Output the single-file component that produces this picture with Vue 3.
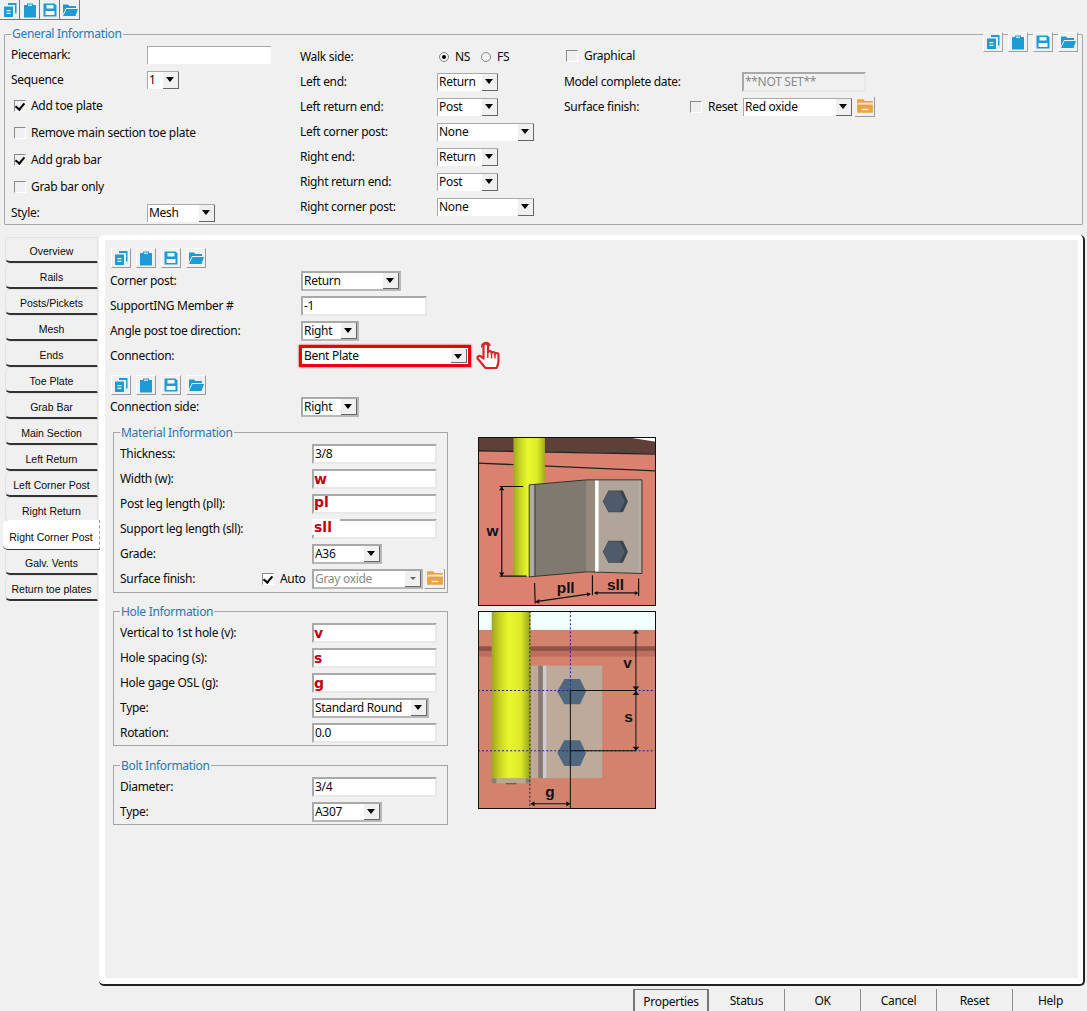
<script setup>
const tabs = ['Overview','Rails','Posts/Pickets','Mesh','Ends','Toe Plate','Grab Bar','Main Section','Left Return','Left Corner Post','Right Return','Right Corner Post','Galv. Vents','Return toe plates']
const icons = ['copy','clip','save','open']
const bottom = ['Properties','Status','OK','Cancel','Reset','Help']
const generalMid = [
  ['Left end:','Return',61],['Left return end:','Post',61],['Left corner post:','None',97],
  ['Right end:','Return',61],['Right return end:','Post',61],['Right corner post:','None',97]
]
</script>

<template>
  <div class="page">
    <svg class="defs" width="0" height="0" aria-hidden="true">
      <defs>
        <symbol id="i-copy" viewBox="0 0 16 16">
          <path fill="#1f9bd4" d="M6 1h8.500v10.500H13V3H6z"/>
          <path fill="#1f9bd4" d="M2 4.500h9V15H2z"/>
          <path fill="#e6f2f8" d="M4.500 8h4v1.200h-4zM4.500 10.800h4V12h-4z"/>
        </symbol>
        <symbol id="i-clip" viewBox="0 0 16 16">
          <path fill="#1f9bd4" d="M2 3h3V1.500h6V3h3v12.500H2z"/>
          <path fill="#bfe3f2" d="M6 2.500h4v1.500H6z"/>
        </symbol>
        <symbol id="i-save" viewBox="0 0 16 16">
          <path fill="#1f9bd4" d="M1.500 1.500h11l2 2v11h-13z"/>
          <path fill="#f4f8fa" d="M4.500 3h7v3.500h-7zM3.500 9h9v4h-9z"/>
        </symbol>
        <symbol id="i-open" viewBox="0 0 16 16">
          <path fill="#1f9bd4" d="M1 2.500h5l1.500 1.500H14v2H4L1 12z"/>
          <path fill="#1f9bd4" d="M4.500 7H16l-2.500 7H1z"/>
        </symbol>
        <symbol id="i-folder" viewBox="0 0 16 16">
          <path fill="#e9a345" d="M1 2h5.500L8 3.500h7V6H1z"/>
          <path fill="#e9a345" d="M1 6.500h14V14H1z"/>
          <path fill="#fbe6c4" d="M2 5h13v1.500H2z"/>
          <path fill="#fff3df" d="M5 10.500h6v1.200H5z"/>
        </symbol>
      </defs>
    </svg>

    <div class="toolbar top-tools">
      <span v-for="i in icons" :key="i" class="tool"><svg viewBox="0 0 16 16"><use :href="'#i-' + i"/></svg></span>
    </div>

    <section class="general">
      <span class="legend">General Information</span>
      <div class="toolbar float-tools">
        <span v-for="i in icons" :key="i" class="tool"><svg viewBox="0 0 16 16"><use :href="'#i-' + i"/></svg></span>
      </div>

      <div class="gcol g1">
        <div class="row r25"><span class="lbl w136">Piecemark:</span><span class="field flat w124"></span></div>
        <div class="row r25"><span class="lbl w136">Sequence</span><span class="select flat w32">1<i class="arrow"></i></span></div>
        <div class="row r27 chk"><i class="box on"></i>Add toe plate</div>
        <div class="row r27 chk"><i class="box"></i>Remove main section toe plate</div>
        <div class="row r27 chk"><i class="box on"></i>Add grab bar</div>
        <div class="row r27 chk"><i class="box"></i>Grab bar only</div>
        <div class="row r25"><span class="lbl w136">Style:</span><span class="select flat w68">Mesh<i class="arrow"></i></span></div>
      </div>

      <div class="gcol g2">
        <div class="row r25">
          <span class="lbl w137">Walk side:</span>
          <i class="radio on"></i><span class="rtxt">NS</span>
          <i class="radio gap"></i><span class="rtxt">FS</span>
        </div>
        <div v-for="r in generalMid" :key="r[0]" class="row r25">
          <span class="lbl w137">{{ r[0] }}</span>
          <span class="select flat" :style="{ width: r[2] + 'px' }">{{ r[1] }}<i class="arrow"></i></span>
        </div>
      </div>

      <div class="gcol g3">
        <div class="row r25 chk graph"><i class="box"></i>Graphical</div>
        <div class="row r25"><span class="lbl w178">Model complete date:</span><span class="field disabled w124">**NOT SET**</span></div>
        <div class="row r25">
          <span class="lbl w126">Surface finish:</span>
          <i class="box"></i><span class="reset">Reset</span>
          <span class="select flat w109">Red oxide<i class="arrow"></i></span>
          <span class="folder"><svg viewBox="0 0 16 16"><use href="#i-folder"/></svg></span>
        </div>
      </div>
    </section>

    <main class="main">
      <nav class="tabs">
        <div v-for="t in tabs" :key="t" class="tab" :class="{ active: t === 'Right Corner Post' }">{{ t }}</div>
      </nav>

      <div class="panel">
        <div class="inner">
          <div class="toolbar in-tools">
            <span v-for="i in icons" :key="i" class="tool sm"><svg viewBox="0 0 16 16"><use :href="'#i-' + i"/></svg></span>
          </div>
          <div class="row r25"><span class="lbl w191">Corner post:</span><span class="select w100">Return<i class="arrow"></i></span></div>
          <div class="row r25"><span class="lbl w191">SupportING Member #</span><span class="field w126">-1</span></div>
          <div class="row r25"><span class="lbl w191">Angle post toe direction:</span><span class="select w58">Right<i class="arrow"></i></span></div>
          <div class="row r25 conn">
            <span class="lbl w189">Connection:</span>
            <span class="red"><span class="select w166 plain">Bent Plate<i class="arrow"></i></span></span>
            <svg class="hand" viewBox="0 0 26 30">
              <path fill="none" stroke="#d8242a" stroke-width="1.600" d="M6 6.500C4.500 1.500 12.500-.5 14 5"/>
              <path fill="#fff" stroke="#d8242a" stroke-width="2.200" stroke-linejoin="round" d="M7.500 5c0-3 4.500-3 4.500 0v6.500c0-2 3.500-2 3.500 0v1c0-2 3.500-2 3.500 0v1c0-2 3.500-2 3.500 0v6.500c0 3-1 5-2 7H9.500L2 18c-1.500-2 1-4 3-2.500l2.500 2z"/>
              <path fill="none" stroke="#d8242a" stroke-width="1.400" d="M11.800 12v5M15.500 12.500v5M19 13.500v4"/>
            </svg>
          </div>
          <div class="toolbar in-tools second">
            <span v-for="i in icons" :key="i" class="tool sm"><svg viewBox="0 0 16 16"><use :href="'#i-' + i"/></svg></span>
          </div>
          <div class="row r25"><span class="lbl w191">Connection side:</span><span class="select w58">Right<i class="arrow"></i></span></div>

          <div class="lower">
            <div class="forms">
              <section class="group mat">
                <span class="legend sm">Material Information</span>
                <div class="row r25"><span class="lbl w192">Thickness:</span><span class="field w125">3/8</span></div>
                <div class="row r25"><span class="lbl w192">Width (w):</span><span class="field w125 mark">w</span></div>
                <div class="row r25"><span class="lbl w192">Post leg length (pll):</span><span class="field w125 mark up">pl</span></div>
                <div class="row r25"><span class="lbl w192">Support leg length (sll):</span><span class="field w125 mark"><b class="patch">sll</b></span></div>
                <div class="row r25"><span class="lbl w192">Grade:</span><span class="select w70">A36<i class="arrow"></i></span></div>
                <div class="row r25">
                  <span class="lbl w142">Surface finish:</span>
                  <i class="box on white"></i><span class="auto">Auto</span>
                  <span class="select w111 gray">Gray oxide<i class="arrow small"></i></span>
                  <span class="folder tight"><svg viewBox="0 0 16 16"><use href="#i-folder"/></svg></span>
                </div>
              </section>
              <section class="group hole">
                <span class="legend sm">Hole Information</span>
                <div class="row r25"><span class="lbl w192">Vertical to 1st hole (v):</span><span class="field w125 mark">v</span></div>
                <div class="row r25"><span class="lbl w192">Hole spacing (s):</span><span class="field w125 mark">s</span></div>
                <div class="row r25"><span class="lbl w192">Hole gage OSL (g):</span><span class="field w125 mark">g</span></div>
                <div class="row r25"><span class="lbl w192">Type:</span><span class="select w117">Standard Round<i class="arrow"></i></span></div>
                <div class="row r25"><span class="lbl w192">Rotation:</span><span class="field w125">0.0</span></div>
              </section>
              <section class="group bolt">
                <span class="legend sm">Bolt Information</span>
                <div class="row r25"><span class="lbl w192">Diameter:</span><span class="field w125">3/4</span></div>
                <div class="row r25"><span class="lbl w192">Type:</span><span class="select w70">A307<i class="arrow"></i></span></div>
              </section>
            </div>

            <div class="figures">
              <svg class="fig f1" viewBox="25 22 532 505">
                <defs>
                  <linearGradient id="post1" x1="0" x2="1" y1="0" y2="0">
                    <stop offset="0" stop-color="#9fa81c"/><stop offset=".2" stop-color="#c6d424"/><stop offset=".45" stop-color="#e8f82c"/><stop offset=".75" stop-color="#dcec2a"/><stop offset="1" stop-color="#a3ab1c"/>
                  </linearGradient>
                </defs>
                <rect x="25" y="22" width="532" height="505" fill="#db8170"/>
                <path fill="#5f4039" d="M25 22h532v50L25 62z"/>
                <path fill="#fff" d="M480 24h77v12z"/>
                <path fill="none" stroke="#222" stroke-width="4" d="M25 63L557 73M25 100L557 123"/>
                <rect x="131" y="22" width="94" height="416" fill="url(#post1)"/>
                <path fill="#b5aca0" d="M178 165L350 150H515V430L350 425 178 440z"/>
                <path fill="#7f7970" d="M195 164L350 150V425L195 438z"/>
                <rect x="350" y="151" width="25" height="274" fill="#97897b"/>
                <rect x="375" y="151" width="11" height="274" fill="#fff"/>
                <rect x="386" y="151" width="118" height="278" fill="#b0a598"/>
                <path fill="none" stroke="#222" stroke-width="2.500" d="M178 165L350 150H515V430L350 425 178 440zM195 164V438"/>
                <path fill="#3c434d" d="M415 182H458L473 215 458 247H415L398 215z"/>
                <path fill="#4f5a6a" d="M415 184H448L464 215 448 245H415L400 215z"/>
                <path fill="#3c434d" d="M415 332H458L473 365 458 398H415L398 365z"/>
                <path fill="#4f5a6a" d="M415 334H448L464 365 448 396H415L400 365z"/>
                <g fill="none" stroke="#111" stroke-width="3.500">
                  <path d="M90 170H160M90 438H170M96 172V436"/>
                  <path d="M194 458L196 520M367 435V495M505 445V497M198 514L360 491M374 488H500"/>
                </g>
                <path fill="#111" d="M96 170L88 181H104zM96 438L88 427H104zM196 515L208 506V520zM362 491L350 486 352 499zM372 488L382 482V495zM504 488L494 482V495z"/>
                <text class="dimtxt" x="68" y="318" text-anchor="middle">w</text>
                <text class="dimtxt" x="287" y="487" text-anchor="middle">pll</text>
                <text class="dimtxt" x="436" y="478" text-anchor="middle">sll</text>
              </svg>

              <svg class="fig f2" viewBox="25 19 532 591">
                <defs>
                  <linearGradient id="post2" x1="0" x2="1" y1="0" y2="0">
                    <stop offset="0" stop-color="#9ca61c"/><stop offset=".2" stop-color="#c8d424"/><stop offset=".45" stop-color="#e8f82c"/><stop offset=".75" stop-color="#dce92a"/><stop offset="1" stop-color="#96a01c"/>
                  </linearGradient>
                </defs>
                <rect x="25" y="19" width="532" height="591" fill="#d3836d"/>
                <rect x="25" y="19" width="532" height="56" fill="#f0fffc"/>
                <rect x="25" y="124" width="532" height="14" fill="#8f5447"/>
                <rect x="25" y="138" width="532" height="17" fill="#bf6f60"/>
                <rect x="182" y="182" width="214" height="336" fill="#bdaa9a"/>
                <rect x="205" y="182" width="14" height="336" fill="#857a70"/>
                <rect x="219" y="182" width="10" height="336" fill="#cfc9d2"/>
                <rect x="66" y="19" width="116" height="500" fill="url(#post2)"/>
                <rect x="66" y="519" width="116" height="15" fill="#b5a99a"/>
                <rect x="66" y="519" width="14" height="15" fill="#86806f"/>
                <rect x="168" y="519" width="14" height="15" fill="#86806f"/>
                <path stroke="#222" stroke-width="2" d="M108 535H140"/>
                <path fill="#4f687f" d="M283 222H330L348 259 330 297H283L262 259z"/>
                <path fill="#4f687f" d="M283 405H330L348 443 330 482H283L262 443z"/>
                <g fill="none" stroke-width="3" stroke-dasharray="6 6">
                  <path stroke="#2020a0" d="M25 256H557M25 436H557M301 19V256"/>
                  <path stroke="#222" d="M180 19V610"/>
                </g>
                <path fill="none" stroke="#111" stroke-width="3" d="M301 256H497M301 436H497M301 256V610M497 78V434M184 595H299"/>
                <path fill="#111" d="M497 75L487 86H507zM497 256L487 244H507zM497 258L487 270H507zM497 436L487 424H507zM182 595L194 587V603zM301 595L289 587V603z"/>
                <text class="dimtxt" x="472" y="188" text-anchor="middle">v</text>
                <text class="dimtxt" x="475" y="350" text-anchor="middle">s</text>
                <text class="dimtxt" x="240" y="575" text-anchor="middle">g</text>
              </svg>
            </div>
          </div>
        </div>
      </div>
    </main>

    <footer class="bottom">
      <span v-for="(b, n) in bottom" :key="b" class="btab" :class="{ on: n === 0 }">{{ b }}</span>
    </footer>
  </div>
</template>

<style>
html, body { margin: 0; background: #f0f0f0; }
</style>

<style scoped>
.page { position: relative; width: 1087px; height: 1011px; overflow: hidden; background: #f0f0f0; color: #0a0a0a; font: 12px/16px "Noto Sans", "Open Sans", sans-serif; letter-spacing: -.3px; }
.defs { position: absolute; }
.toolbar { display: flex; }
.top-tools { height: 20px; }
.tool { width: 20px; height: 20px; box-sizing: border-box; background: #f0f0f0; border-right: 1px solid #777; border-bottom: 1px solid #777; display: flex; align-items: center; justify-content: center; }
.tool svg { width: 16px; height: 16px; }
.general { position: relative; box-sizing: border-box; margin: 14px 0 0 4px; width: 1079px; height: 191px; border: 1px solid #a6a6a6; display: flex; padding: 7px 0 0 6px; border-radius: 1px; }
.legend { position: absolute; left: 6px; top: -8px; line-height: 14px; padding: 0 1px; background: #f0f0f0; color: #2a77b4; }
.float-tools { position: absolute; right: 4px; top: -3px; gap: 5px; }
.float-tools .tool { border: 0; border-right: 1px solid #a0a0a0; border-bottom: 1px solid #a0a0a0; border-top: 1px solid #fff; border-left: 1px solid #fff; }
.gcol { display: flex; flex-direction: column; }
.g1 { width: 289px; }
.g2 { width: 264px; padding-top: 2px; }
.g3 { padding-top: 2px; }
.row { display: flex; align-items: center; flex: none; white-space: nowrap; }
.r25 { height: 25px; }
.r27 { height: 27px; }
.lbl { flex: none; }
.w136 { width: 136px; } .w137 { width: 137px; } .w178 { width: 178px; } .w126 { width: 126px; } .w191 { width: 191px; } .w189 { width: 189px; } .w192 { width: 192px; } .w142 { width: 142px; }
.field, .select { position: relative; flex: none; box-sizing: border-box; height: 20px; background: #fff; border: 2px solid #a9a9a9; border-bottom-color: #e8e8e8; border-right-color: #e8e8e8; padding-left: 1px; line-height: 16px; }
.select { border: 2px solid #a9a9a9; border-color: #a9a9a9 #b8b8b8 #b8b8b8 #a9a9a9; }
.select.flat, .field.flat { height: 18px; border: 0; border-left: 1px solid #a9a9a9; border-top: 1px solid #a9a9a9; padding-left: 1px; line-height: 16px; }
.w124 { width: 124px; } .w125 { width: 125px; } .field.w126 { width: 126px; } .w32 { width: 32px; } .w68 { width: 68px; } .w109 { width: 109px; } .w100 { width: 100px; } .w58 { width: 58px; } .w70 { width: 70px; } .w111 { width: 111px; } .w117 { width: 117px; } .w166 { width: 166px; }
.disabled { background: #f0f0f0; color: #8a8a8a; }
.gray { color: #8a8a8a; }
.arrow { position: absolute; right: 0; top: 0; bottom: 0; width: 16px; background: #f0f0f0; border-right: 1px solid #666; border-bottom: 1px solid #666; box-sizing: border-box; }
.arrow::after { content: ""; position: absolute; left: 3px; top: 5px; border: 4.500px solid transparent; border-top: 5px solid #000; border-bottom: 0; }
.arrow.small::after { left: 5px; top: 6px; border-width: 3px 3px 0; border-top-color: #666; }
.box { flex: none; position: relative; box-sizing: border-box; width: 12px; height: 12px; background: #f0f0f0; border: 1px solid #8a8a8a; border-right-color: #fff; border-bottom-color: #fff; display: inline-block; }
.box.white { background: #fff; }
.box.on::after { content: ""; position: absolute; left: 2px; top: 0; width: 4px; height: 7px; border: solid #000; border-width: 0 2px 2px 0; transform: rotate(40deg); }
.chk { padding-left: 3px; }
.chk .box { margin-right: 5px; }
.graph { padding-left: 2px; padding-bottom: 2px; box-sizing: border-box; }
.graph .box { margin-right: 6px; }
.radio { flex: none; box-sizing: border-box; width: 10px; height: 10px; border-radius: 50%; background: #f0f0f0; border: 1px solid #8a8a8a; margin-left: 2px; position: relative; }
.radio.on::after { content: ""; position: absolute; left: 2px; top: 2px; width: 4px; height: 4px; border-radius: 50%; background: #000; }
.radio.gap { margin-left: 0; }
.rtxt { margin: 0 11px 0 6px; width: 15px; }
.reset { margin-left: 6px; width: 35px; }
.folder { flex: none; box-sizing: border-box; width: 20px; height: 20px; margin-left: 3px; border-right: 1px solid #999; border-bottom: 1px solid #999; display: flex; align-items: center; justify-content: center; }
.folder svg { width: 18px; height: 18px; }
.folder.tight { margin-left: 2px; }
.main { display: flex; margin-top: 10px; height: 752px; }
.tabs { flex: none; box-sizing: border-box; width: 99px; padding: 2px 0 0 5px; display: flex; flex-direction: column; }
.tab { flex: none; box-sizing: border-box; width: 93px; height: 26px; padding-top: 2px; text-align: center; font: 10.500px/22px "Liberation Sans", Arial, sans-serif; letter-spacing: 0; background: #f0f0f0; border: 1px solid #e2e2e2; border-bottom: 2px solid #333; border-radius: 5px 0 0 5px; }
.tab.active { position: relative; z-index: 2; width: 97px; height: 30px; margin: -3px 0 -1px -2px; line-height: 30px; background: #fff; border: 0; border-right: 1px dashed #999; border-bottom: 1px solid #333; }
.panel { flex: none; box-sizing: border-box; width: 986px; height: 751px; background: #fff; border-right: 2px solid #222; border-bottom: 2px solid #222; border-radius: 5px; padding: 5px 5px 6px 6px; }
.inner { box-sizing: border-box; height: 100%; background: #f0f0f0; padding: 8px 0 0 5px; display: flex; flex-direction: column; }
.in-tools { gap: 5px; margin: 0 0 0 1px; height: 20px; }
.tool.sm { width: 20px; height: 20px; border: 1px solid; border-color: #fff #999 #999 #fff; }
.second { margin-top: 7px; height: 19px; }
.conn { height: 25px; position: relative; }
.red { flex: none; display: flex; padding: 0; border: 3px solid #e8000e; box-shadow: 0 0 2px #e8000e; height: 22px; box-sizing: border-box; align-items: stretch; width: 172px; }
.plain { flex: 1; width: auto; height: auto; border: 0; padding-left: 2px; }
.plain .arrow { right: 1px; top: 1px; bottom: 1px; }
.hand { width: 26px; height: 30px; margin-left: 5px; }
.lower { display: flex; margin-top: 13px; margin-left: 3px; }
.forms { width: 335px; }
.group { position: relative; box-sizing: border-box; border: 1px solid #a6a6a6; width: 335px; padding: 8px 0 0 6px; }
.legend.sm { left: 6px; top: -7px; }
.mat { height: 161px; }
.hole { height: 135px; margin-top: 18px; }
.bolt { height: 60px; margin-top: 19px; }
.mark { color: #c00010; font: bold 14px/16px "DejaVu Sans", sans-serif; letter-spacing: 0; padding-left: 0; }
.up { line-height: 12px; }
.patch { position: absolute; left: -2px; top: -2px; background: #fff; padding: 0 8px 0 2px; font-weight: bold; }
.auto { margin: 0 6px; width: 26px; }
.figures { display: flex; flex-direction: column; gap: 5px; margin: 5px 0 0 30px; }
.fig { display: block; width: 178px; box-sizing: border-box; outline: 1px solid #111; outline-offset: -1px; }
.f1 { height: 169px; }
.f2 { height: 198px; }
.dimtxt { font: bold 46px "Liberation Sans", Arial, sans-serif; fill: #111; }
.bottom { display: flex; margin: 2px 0 0 633px; height: 22px; }
.btab { box-sizing: border-box; width: 76px; flex: none; border-right: 1px solid #8c8c8c; text-align: center; line-height: 23px; }
.btab.on { border: 1px solid #777; border-bottom: 0; border-right-width: 2px; border-left-width: 2px; }
</style>
